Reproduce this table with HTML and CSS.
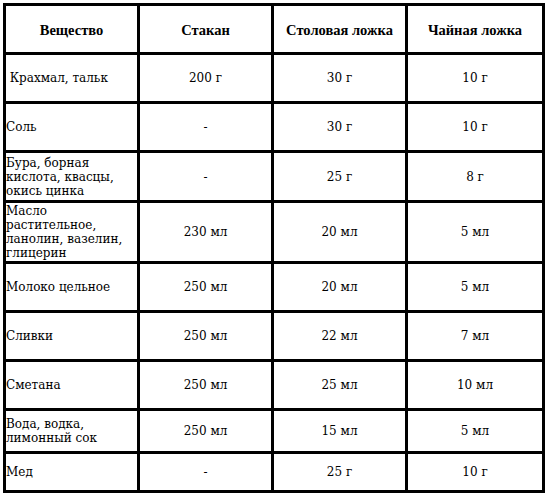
FILE: index.html
```html
<!DOCTYPE html>
<html lang="ru">
<head>
<meta charset="utf-8">
<title>Таблица мер</title>
<link rel="stylesheet" href="styles.css">
</head>
<body>
<table class="measures">
  <colgroup>
    <col class="c1"><col class="c2"><col class="c3"><col class="c4">
  </colgroup>
  <thead>
    <tr class="r49">
      <th>Вещество</th>
      <th>Стакан</th>
      <th>Столовая ложка</th>
      <th>Чайная ложка</th>
    </tr>
  </thead>
  <tbody>
    <tr class="r49"><td class="name">&nbsp;Крахмал, тальк</td><td>200 г</td><td>30 г</td><td>10 г</td></tr>
    <tr class="r49"><td class="name">Соль</td><td>-</td><td>30 г</td><td>10 г</td></tr>
    <tr class="r50"><td class="name">Бура, борная кислота, квасцы, окись цинка</td><td>-</td><td>25 г</td><td>8 г</td></tr>
    <tr class="r61"><td class="name">Масло растительное, ланолин, вазелин, глицерин</td><td>230 мл</td><td>20 мл</td><td>5 мл</td></tr>
    <tr class="r49"><td class="name">Молоко цельное</td><td>250 мл</td><td>20 мл</td><td>5 мл</td></tr>
    <tr class="r49"><td class="name">Сливки</td><td>250 мл</td><td>22 мл</td><td>7 мл</td></tr>
    <tr class="r49"><td class="name">Сметана</td><td>250 мл</td><td>25 мл</td><td>10 мл</td></tr>
    <tr class="r43"><td class="name">Вода, водка, лимонный сок</td><td>250 мл</td><td>15 мл</td><td>5 мл</td></tr>
    <tr class="r39"><td class="name">Мед</td><td>-</td><td>25 г</td><td>10 г</td></tr>
  </tbody>
</table>
</body>
</html>
```

FILE: styles.css
```css
html, body {
  background: #ffffff;
}
body {
  margin: 3px 0 0 3px;
  color: #000000;
  font-family: "DejaVu Serif", "Liberation Serif", serif;
  font-size: 12px;
  line-height: 14px;
}
.measures {
  border-collapse: separate;
  border-spacing: 0;
  table-layout: fixed;
  width: 542px;
  border-top: 3px solid #000;
  border-left: 3px solid #000;
}
.c1, .c2, .c3 { width: 134px; }
.c4 { width: 137px; }
.measures th,
.measures td {
  box-sizing: border-box;
  padding: 0;
  border-right: 3px solid #000;
  border-bottom: 3px solid #000;
  text-align: center;
  vertical-align: middle;
}
.measures th {
  font-family: "Liberation Serif", "Times New Roman", serif;
  font-weight: bold;
  font-size: 14.5px;
  padding-top: 2px;
}
.measures td.name {
  text-align: left;
}
.r49 { height: 49px; }
.r50 { height: 50px; }
.r61 { height: 61px; }
.r43 { height: 43px; }
.r39 { height: 39px; }
```
